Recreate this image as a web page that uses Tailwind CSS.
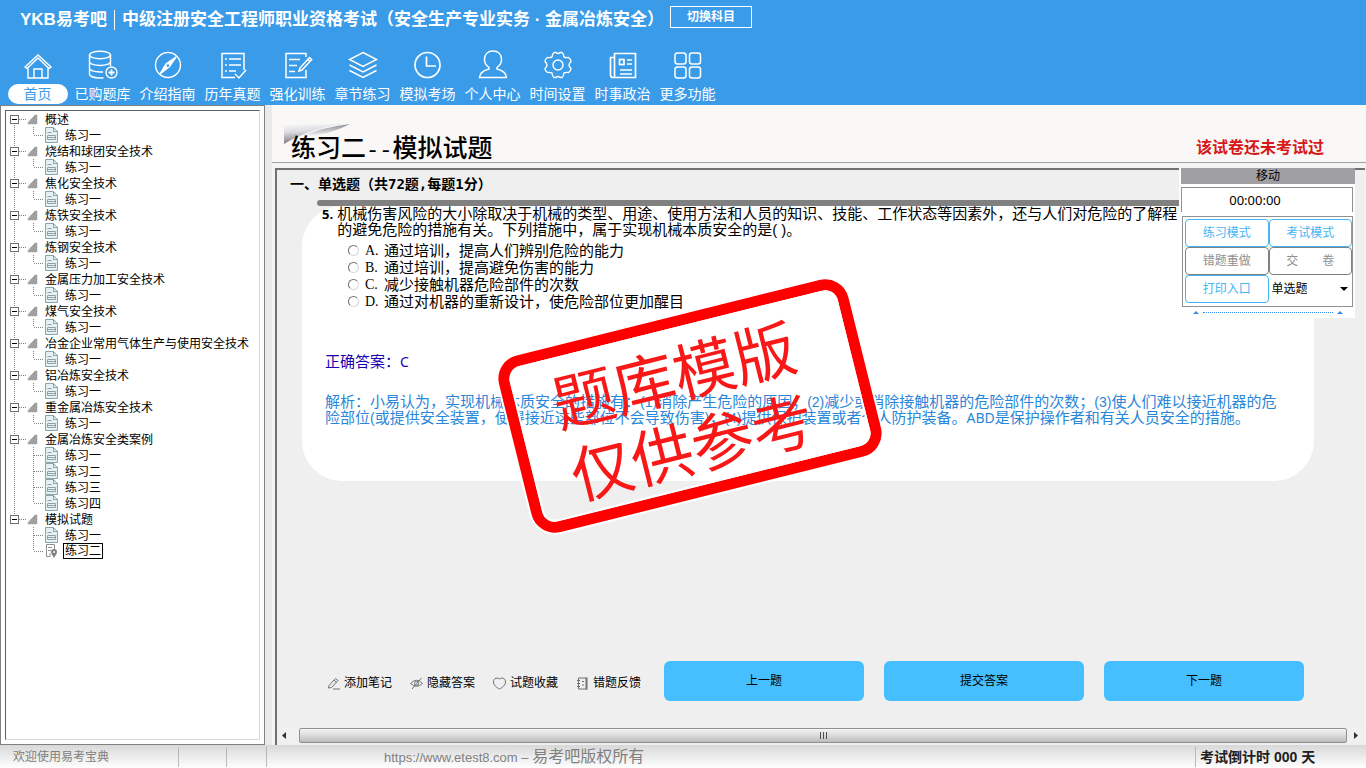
<!DOCTYPE html>
<html lang="zh-CN">
<head>
    <meta charset="UTF-8">
    <meta name="viewport" content="width=device-width, initial-scale=1.0">
    <title>YKB易考吧 - 模拟试题</title>
    <script src="https://cdn.jsdelivr.net/npm/@tailwindcss/browser@4"></script>
    <style>
        body {
            font-family: 'Liberation Sans', 'Noto Sans CJK SC', sans-serif;
        }
    </style>
</head>
<body class="min-h-screen flex flex-col bg-[#eaeaea] text-black text-xs whitespace-nowrap overflow-hidden">

    <!-- Header -->
    <header class="h-[105px] shrink-0 bg-[#3a9be9] text-white">
        <div class="flex items-center h-10 pl-5">
            <span class="text-[17px] font-bold">YKB易考吧</span>
            <span class="w-px h-5 bg-white mx-[7px]"></span>
            <h1 class="text-[17px] font-bold">中级注册安全工程师职业资格考试（安全生产专业实务 · 金属冶炼安全）</h1>
            <button class="w-[82px] h-[22px] ml-[6px] mb-[6px] border border-white text-xs font-bold">切换科目</button>
        </div>
        <nav class="flex pl-[5px] pt-2 text-sm">
            <a href="#" class="w-[65px] flex flex-col items-center gap-1">
                <svg class="w-8 h-8" viewBox="0 0 32 32" fill="none" stroke="white" stroke-width="1.4"><path d="M3 19 16 7l13 12-2 1.500L16 10 5 20.500zM6 19v11h20V19M12 30v-9h8v9"/></svg>
                <span class="w-[60px] h-5 leading-5 rounded-full bg-white text-[#3a9be9] text-center">首页</span>
            </a>
            <a href="#" class="w-[65px] flex flex-col items-center gap-1">
                <svg class="w-8 h-8" viewBox="0 0 32 32" fill="none" stroke="white" stroke-width="1.400"><ellipse cx="13" cy="7" rx="10.500" ry="3.800"/><path d="M2.500 7v19c0 2.500 5 4 11 4h3M23.500 7v11M2.500 13.500c0 2.500 5 4 10.500 4s10.500-1.500 10.500-4M2.500 20c0 2.500 5 4 10.500 4h3"/><circle cx="24.500" cy="24.500" r="5.500"/><path d="M24.500 21.500v6M21.500 24.500h6" stroke-width="1.800"/></svg>
                <span class="h-5 leading-5">已购题库</span>
            </a>
            <a href="#" class="w-[65px] flex flex-col items-center gap-1">
                <svg class="w-8 h-8" viewBox="0 0 32 32" fill="none" stroke="white" stroke-width="1.400"><circle cx="16" cy="17" r="12.500"/><path d="m24 9-6.500 9.500L8 26l6-10z"/><path d="m24 9-6.500 9.500L14 16zM8 26l6-10 1.500 4z" fill="white" stroke-width="0.500"/><circle cx="16" cy="17.500" r="1.200" fill="#3a9be9" stroke="none"/></svg>
                <span class="h-5 leading-5">介绍指南</span>
            </a>
            <a href="#" class="w-[65px] flex flex-col items-center gap-1">
                <svg class="w-8 h-8" viewBox="0 0 32 32" fill="none" stroke="white" stroke-width="1.500"><path d="M18 29.500H5v-24h22V22M18 26l4 4 7-8M8 11h2M12 11h12M8 17h2M12 17h12M8 23h2M12 23h7"/></svg>
                <span class="h-5 leading-5">历年真题</span>
            </a>
            <a href="#" class="w-[65px] flex flex-col items-center gap-1">
                <svg class="w-8 h-8" viewBox="0 0 32 32" fill="none" stroke="white" stroke-width="1.500"><path d="M24 22v7.500H4v-24h20V9M7 11.500h11M7 17.500h8M7 23.500h6"/><path d="m18 20 9.500-10.500 2.200 2L20 22l-3 1zM26 11.500l2 2"/></svg>
                <span class="h-5 leading-5">强化训练</span>
            </a>
            <a href="#" class="w-[65px] flex flex-col items-center gap-1">
                <svg class="w-8 h-8" viewBox="0 0 32 32" fill="none" stroke="white" stroke-width="1.500"><path d="m16 4.500 13.500 7L16 18.500l-13.500-7zM2.500 17 16 24l13.500-7M2.500 22.500l13.500 7 13.500-7"/></svg>
                <span class="h-5 leading-5">章节练习</span>
            </a>
            <a href="#" class="w-[65px] flex flex-col items-center gap-1">
                <svg class="w-8 h-8" viewBox="0 0 32 32" fill="none" stroke="white" stroke-width="1.700"><circle cx="15.500" cy="17" r="12.500"/><path d="M14.500 8.500V18H24"/></svg>
                <span class="h-5 leading-5">模拟考场</span>
            </a>
            <a href="#" class="w-[65px] flex flex-col items-center gap-1">
                <svg class="w-8 h-8" viewBox="0 0 32 32" fill="none" stroke="white" stroke-width="1.500"><path d="M12 19.500c-3-2-4.500-4.500-4.500-8C7.500 6 11 3 16 3s8.500 3 8.500 8.500c0 3.500-1.500 6-4.500 8v1.500c4 1 9 3 9.500 8.500h-27c.500-5.500 5.500-7.500 9.500-8.500z"/></svg>
                <span class="h-5 leading-5">个人中心</span>
            </a>
            <a href="#" class="w-[65px] flex flex-col items-center gap-1">
                <svg class="w-8 h-8" viewBox="0 0 32 32" fill="none" stroke="white" stroke-width="1.400" stroke-linejoin="round"><path d="M12 4.500h2q2 2 4 0h2q1.500 1 2 4.500 2 1 4.500.500 2.500 1.500 2.500 4-2 2-2 3.500t2 3.500q0 2.500-2.500 4-2.500-.500-4.500.500-.500 3.500-2 4.500h-2q-2-2-4 0h-2q-1.500-1-2-4.500-2-1-4.500-.500Q3 23 3 20.500 5 18.500 5 17t-2-3.500q0-2.500 2.500-4 2.500.500 4.500-.500.500-3.500 2-4.500z"/><circle cx="16" cy="17" r="5"/></svg>
                <span class="h-5 leading-5">时间设置</span>
            </a>
            <a href="#" class="w-[65px] flex flex-col items-center gap-1">
                <svg class="w-8 h-8" viewBox="0 0 32 32" fill="none" stroke="white" stroke-width="1.700"><path d="M7.500 29V5.500h21v24H6Q3.500 29.500 3.500 27V9.500h4M13 22h12M13 26h12M20 12h5M20 16h5"/><rect x="12.500" y="11.500" width="4.500" height="5"/></svg>
                <span class="h-5 leading-5">时事政治</span>
            </a>
            <a href="#" class="w-[65px] flex flex-col items-center gap-1">
                <svg class="w-8 h-8" viewBox="0 0 32 32" fill="none" stroke="white" stroke-width="1.500"><rect x="3" y="5" width="11" height="11" rx="2.500"/><rect x="17.500" y="5" width="11" height="11" rx="2.500"/><rect x="3" y="19" width="11" height="11" rx="2.500"/><rect x="17.500" y="19" width="11" height="11" rx="2.500"/></svg>
                <span class="h-5 leading-5">更多功能</span>
            </a>
        </nav>
    </header>

    <div class="flex flex-1">
        <!-- Chapter tree -->
        <aside class="w-[265px] shrink-0 bg-white border border-[#808080] p-1">
            <ul id="tree" class="h-full border-l border-t border-[#606060] border-r-[#d8d8d8] border-r border-b border-b-[#d8d8d8]"></ul>
        </aside>

        <main class="flex-1 min-w-0 ml-[7px] flex flex-col bg-[#f4f4f4]">
            <!-- Paper title -->
            <div class="h-[58px] flex items-end justify-between pl-3 pr-[42px] bg-[#f9f8f7] border-b border-[#a0a0a0]">
                <div class="relative h-10 pl-[7px] flex items-end">
                    <svg class="absolute left-0 top-0 w-[70px] h-6" viewBox="0 0 70 24">
                        <defs>
                            <linearGradient id="fold" x1="0" y1="0" x2="0.200" y2="1">
                                <stop offset="0" stop-color="#fafafa"/>
                                <stop offset="0.400" stop-color="#dcdce0"/>
                                <stop offset="1" stop-color="#77777e"/>
                            </linearGradient>
                            <linearGradient id="flap" x1="0" y1="0" x2="0" y2="1">
                                <stop offset="0" stop-color="#8c8c94"/>
                                <stop offset="1" stop-color="#f4f4f6"/>
                            </linearGradient>
                        </defs>
                        <path d="M0 2h66Q30 4 0 22z" fill="url(#fold)"/>
                        <path d="M66 2Q40 5 18 14 44 14 66 2z" fill="url(#flap)"/>
                    </svg>
                    <h2 class="relative text-[25px] leading-5 font-medium">练习二<span class="font-normal font-['Liberation_Mono'] text-[22px]">--</span>模拟试题</h2>
                </div>
                <p class="text-base leading-7 font-bold text-[#d81818]">该试卷还未考试过</p>
            </div>

            <div class="flex-1 relative flex flex-col mt-[5px] ml-[3px] mr-px border-l-2 border-t-2 border-[#707070] bg-[#efefef]">
                <section>
                    <h3 class="pt-1 pl-[13px] text-sm leading-5 font-bold">一、单选题（共<span class="font-['DejaVu_Sans_Mono']">72</span>题<span class="font-['DejaVu_Sans_Mono']">,</span>每题<span class="font-['DejaVu_Sans_Mono']">1</span>分）</h3>
                    <div class="mt-[6px] ml-10 mr-[170px] h-[6px] rounded-l-sm bg-[#808080]"></div>
                    <article class="ml-[25px] mr-[51px] h-[275px] rounded-[40px] bg-white text-[15px] leading-4">
                        <div class="flex gap-1 pl-5">
                            <span class="font-bold text-[13px] font-['Open_Sans']">5.</span>
                            <p>机械伤害风险的大小除取决于机械的类型、用途、使用方法和人员的知识、技能、工作状态等因素外，还与人们对危险的了解程<br>的避免危险的措施有关。下列措施中，属于实现机械本质安全的是(&nbsp;)。</p>
                        </div>
                        <div class="mt-1 pl-[46px] leading-[17px]">
                            <label class="flex items-center"><input type="radio" name="answer" class="appearance-none w-[11px] h-[11px] rounded-full border border-[#d8d8d8] border-t-[#707070] border-l-[#707070] bg-white"><span class="w-[19px] ml-[6px] text-sm leading-[17px] font-['Liberation_Serif']">A.</span>通过培训，提高人们辨别危险的能力</label>
                            <label class="flex items-center"><input type="radio" name="answer" class="appearance-none w-[11px] h-[11px] rounded-full border border-[#d8d8d8] border-t-[#707070] border-l-[#707070] bg-white"><span class="w-[19px] ml-[6px] text-sm leading-[17px] font-['Liberation_Serif']">B.</span>通过培训，提高避免伤害的能力</label>
                            <label class="flex items-center"><input type="radio" name="answer" class="appearance-none w-[11px] h-[11px] rounded-full border border-[#d8d8d8] border-t-[#707070] border-l-[#707070] bg-white"><span class="w-[19px] ml-[6px] text-sm leading-[17px] font-['Liberation_Serif']">C.</span>减少接触机器危险部件的次数</label>
                            <label class="flex items-center"><input type="radio" name="answer" class="appearance-none w-[11px] h-[11px] rounded-full border border-[#d8d8d8] border-t-[#707070] border-l-[#707070] bg-white"><span class="w-[19px] ml-[6px] text-sm leading-[17px] font-['Liberation_Serif']">D.</span>通过对机器的重新设计，使危险部位更加醒目</label>
                        </div>
                        <p class="mt-11 pl-[23px] text-[#1a00b0]">正确答案：<span class="font-['Noto_Sans'] text-sm leading-4">C</span></p>
                        <p class="mt-6 pl-[23px] text-[#2a86d8]">解析：小易认为，实现机械本质安全的措施有：<span class="text-sm leading-4">(1)</span>消除产生危险的原因；<span class="text-sm leading-4">(2)</span>减少或消除接触机器的危险部件的次数；<span class="text-sm leading-4">(3)</span>使人们难以接近机器的危<br>险部位<span class="text-sm leading-4">(</span>或提供安全装置，使得接近这些部位不会导致伤害<span class="text-sm leading-4">)</span>；<span class="text-sm leading-4">(4)</span>提供保护装置或者个人防护装备。<span class="text-sm leading-4 font-['Noto_Sans']">ABD</span>是保护操作者和有关人员安全的措施。</p>
                    </article>
                </section>

                <!-- Stamp over the question -->
                <div class="absolute left-[231px] top-[143px] w-[364px] h-[186px] -rotate-14 rounded-[26px] border-[2px] border-white pointer-events-none">
                    <div class="w-full h-full rounded-3xl border-[11px] border-[#fe0000]">
                        <div class="w-full h-full pt-3 pr-4 flex flex-col items-center justify-center rounded-[13px] border-2 border-white text-[#f81818] text-[62px] leading-[74px]">
                            <span>题库模版</span>
                            <span>仅供参考</span>
                        </div>
                    </div>
                </div>

                <!-- Floating exam palette -->
                <div class="absolute right-[10px] top-[-2px] w-[176px] pl-[2px] bg-white">
                    <div class="h-4 leading-4 bg-[#a0a0a4] text-center">移动</div>
                    <div class="h-[25px] mt-[3px] mr-[2px] pr-6 border border-b-0 border-[#909090] text-center leading-6 text-[13px] font-['Noto_Sans']">00:00:00</div>
                    <div class="mt-1 ml-px mr-[2px] p-[2px] pr-0 h-[91px] border border-[#909090] grid grid-cols-2 grid-rows-[28px_28px_28px]">
                        <button class="rounded-sm border border-[#45b5f5] text-[#45b5f5]">练习模式</button>
                        <button class="rounded-sm border border-[#45b5f5] text-[#45b5f5]">考试模式</button>
                        <button class="rounded-sm border border-[#808080] text-[#909090]">错题重做</button>
                        <button class="rounded-sm border border-[#808080] text-[#909090]">交<span class="inline-block w-6"></span>卷</button>
                        <button class="rounded-sm border border-[#45b5f5] text-[#45b5f5]">打印入口</button>
                        <div class="flex items-center pl-[3px] pr-1">
                            <select aria-label="题型" class="appearance-none flex-1 min-w-0 bg-white">
                                <option>单选题</option>
                            </select>
                            <svg class="w-2 h-1" viewBox="0 0 8 4"><path d="M0 0h8L4 4z"/></svg>
                        </div>
                    </div>
                    <div class="h-[11px] flex items-center gap-1 pl-3 pr-3">
                        <svg class="w-[6px] h-[3px]" viewBox="0 0 6 3"><path d="M0 3h6L3 0z" fill="#2f8fee"/></svg>
                        <span class="flex-1 border-t border-dotted border-[#2f8fee]"></span>
                        <svg class="w-[6px] h-[3px]" viewBox="0 0 6 3"><path d="M0 3h6L3 0z" fill="#2f8fee"/></svg>
                    </div>
                </div>

                <!-- Question tools -->
                <div class="mt-auto mb-[27px] pl-[50px] pr-[61px] flex items-center justify-between">
                    <div class="flex pt-1">
                        <a href="#" class="w-[83px] flex items-center gap-1">
                            <svg class="w-[13px] h-[13px]" viewBox="0 0 13 13" fill="none" stroke="#707070"><path d="M1.500 11 2 8.500 8.500 1.500l2.500 2L4.500 10.500zM7 3l2.500 2.500M6 12h7"/></svg>
                            添加笔记
                        </a>
                        <a href="#" class="w-[83px] flex items-center gap-1">
                            <svg class="w-[13px] h-[13px]" viewBox="0 0 13 13" fill="none" stroke="#707070"><path d="M.500 6.500Q6.500 0 12.500 6.500 6.500 12 .500 6.500zM11.500 1 2 12"/><circle cx="6.500" cy="6.500" r="2"/></svg>
                            隐藏答案
                        </a>
                        <a href="#" class="w-[83px] flex items-center gap-1">
                            <svg class="w-[13px] h-[13px]" viewBox="0 0 13 13" fill="none" stroke="#707070"><path d="M6.500 2C5 .500.500.500.500 5c0 3 3 5.500 6 7 3-1.500 6-4 6-7 0-4.500-4.500-4.500-6-3z"/></svg>
                            试题收藏
                        </a>
                        <a href="#" class="flex items-center gap-1">
                            <svg class="w-[13px] h-[13px]" viewBox="0 0 13 13" fill="none" stroke="#707070"><path d="M2.500 1h8v11h-8zM1 3.500h3M1 6.500h3M1 9.500h3M6 4.500h2M6 8h2"/><path d="M10.500.500v12" stroke-width="2"/></svg>
                            错题反馈
                        </a>
                    </div>
                    <div class="flex gap-5">
                        <button class="w-[200px] h-10 rounded-md bg-[#45bfff]">上一题</button>
                        <button class="w-[200px] h-10 rounded-md bg-[#45bfff]">提交答案</button>
                        <button class="w-[200px] h-10 rounded-md bg-[#45bfff]">下一题</button>
                    </div>
                </div>

                <!-- Horizontal scrollbar -->
                <div class="h-[15px] mb-[2px] flex items-center bg-[#f0f0f0]">
                    <svg class="w-[22px] h-[7px]" viewBox="0 0 22 7"><path d="M9 0v7L5 3.500z" fill="#303030"/></svg>
                    <div class="flex-1 h-[15px] flex items-center justify-center gap-[2px] border border-[#909090] rounded-xs bg-linear-to-b from-[#f4f4f4] via-[#dadada] to-[#bcbcc0]">
                        <span class="w-px h-[7px] bg-[#505050]"></span>
                        <span class="w-px h-[7px] bg-[#505050]"></span>
                        <span class="w-px h-[7px] bg-[#505050]"></span>
                    </div>
                    <svg class="w-[18px] h-[7px]" viewBox="0 0 18 7"><path d="M7 0v7l4-3.500z" fill="#303030"/></svg>
                </div>
            </div>
        </main>
    </div>

    <!-- Status bar -->
    <footer class="h-[23px] shrink-0 flex items-center bg-linear-to-b from-[#d8d8d8] to-white text-[#808080]">
        <span class="w-[178px] pl-[13px]">欢迎使用易考宝典</span>
        <span class="w-12 h-5 border-l border-[#b8b8b8]"></span>
        <span class="w-10 h-5 border-l border-[#b8b8b8]"></span>
        <span class="flex-1 h-5 leading-5 border-l border-[#b8b8b8] pl-[117px] text-base"><a href="#" class="text-[13px]">https://www.etest8.com<span> – </span></a>易考吧版权所有</span>
        <span class="w-[171px] h-5 leading-5 border-l border-[#b8b8b8] pl-1 text-sm font-bold text-[#202020]">考试倒计时 000 天</span>
    </footer>

    <script>
        const chapters = [
            { name: '概述', items: ['练习一'] },
            { name: '烧结和球团安全技术', items: ['练习一'] },
            { name: '焦化安全技术', items: ['练习一'] },
            { name: '炼铁安全技术', items: ['练习一'] },
            { name: '炼钢安全技术', items: ['练习一'] },
            { name: '金属压力加工安全技术', items: ['练习一'] },
            { name: '煤气安全技术', items: ['练习一'] },
            { name: '冶金企业常用气体生产与使用安全技术', items: ['练习一'] },
            { name: '铝冶炼安全技术', items: ['练习一'] },
            { name: '重金属冶炼安全技术', items: ['练习一'] },
            { name: '金属冶炼安全类案例', items: ['练习一', '练习二', '练习三', '练习四'] },
            { name: '模拟试题', items: ['练习一', '练习二'] }
        ];

        const docIcon = '<path d="M39.500 .500h8l4 4v11h-12z" fill="#e4f0f2" stroke="#8aa4a8"/><path d="M47.500 .500v4h4M41.500 5.500h4M41.500 8.500h8v4h-8zM41.500 10.500h8" fill="none" stroke="#8aa4a8"/>';
        const currentIcon = '<path d="M40.500 1.500h8v5M40.500 1.500v12h3M42 4.500h4M42 7.500h3M44 10v4" fill="none" stroke="#909090"/><path d="M48 6a3 3 0 0 1 3 3c0 2-1.500 3-3 6-1.500-3-3-4-3-6a3 3 0 0 1 3-3z" fill="#808080"/><circle cx="48" cy="9" r="1" fill="white"/>';

        function groupRow(chapter, first, last) {
            const line = `M8.500 ${first ? 8 : 0}V${last ? 8 : 16}`;
            return `<div class="h-4 flex items-center leading-[18px]">
                <svg class="w-[39px] h-4 shrink-0" viewBox="0 0 39 16">
                    <path d="${line}M13 8.500h7" stroke="#808080" stroke-dasharray="1 1" fill="none"/>
                    <rect x="4.500" y="4.500" width="8" height="8" fill="white" stroke="#707070"/>
                    <path d="M6 8.500h5" stroke="black"/>
                    <path d="M29 4h2v9h-9v-1.500z" fill="#a0a0a0" stroke="#a0a0a0" stroke-width="0.500"/>
                </svg><span class="pt-px">${chapter.name}</span></div>`;
        }

        function itemRow(name, lastItem, lastChapter) {
            const current = lastItem && lastChapter;
            return `<li class="h-4 flex items-center leading-4">
                <svg class="w-[57px] h-4 shrink-0" viewBox="0 0 57 16">
                    <path d="${lastChapter ? '' : 'M8.500 0v16'}M27.500 0V${lastItem ? 8 : 16}M28 8.500h10" stroke="#808080" stroke-dasharray="1 1" fill="none"/>
                    ${current ? currentIcon : docIcon}
                </svg><a href="#" class="${current ? 'px-px h-4 leading-[15px] border border-black' : 'px-[2px] pt-px'}">${name}</a></li>`;
        }

        document.getElementById('tree').innerHTML = chapters.map((chapter, i) => {
            const last = i === chapters.length - 1;
            const items = chapter.items.map((name, j) => itemRow(name, j === chapter.items.length - 1, last)).join('');
            return `<li>${groupRow(chapter, i === 0, last)}<ul>${items}</ul></li>`;
        }).join('');
    </script>
</body>
</html>
